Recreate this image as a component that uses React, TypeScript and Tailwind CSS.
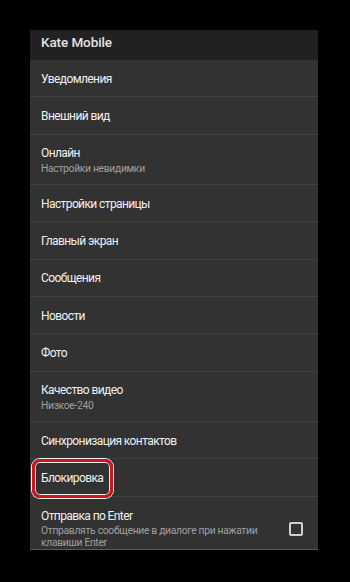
const items: { title: string; sub?: string; mark?: boolean }[] = [
  { title: "Уведомления" },
  { title: "Внешний вид" },
  { title: "Онлайн", sub: "Настройки невидимки" },
  { title: "Настройки страницы" },
  { title: "Главный экран" },
  { title: "Сообщения" },
  { title: "Новости" },
  { title: "Фото" },
  { title: "Качество видео", sub: "Низкое-240" },
  { title: "Синхронизация контактов" },
  { title: "Блокировка", mark: true },
];

function Row({ title, sub, mark }: { title: string; sub?: string; mark?: boolean }) {
  return (
    <div
      className={`relative flex flex-col justify-center border-b border-[#414141] px-[11px] pt-[2px] ${
        sub ? "h-[50.5px]" : "h-[37.3px]"
      }`}
    >
      <p className="text-[12px] leading-[15px] tracking-[-0.6px] text-[#f0f0f0]">{title}</p>
      {sub && (
        <p className="mt-[1px] text-[10.3px] leading-[13px] tracking-[-0.3px] text-[#a0a0a0]">{sub}</p>
      )}
      {mark && (
        <span className="absolute left-[2px] top-[0px] h-[39px] w-[81px] rounded-[8px] border-[3px] border-[#d4141c] shadow-[0_0_0_1px_#f2f2f2,inset_0_0_0_1px_#f2f2f2]" />
      )}
    </div>
  );
}

export default function App() {
  return (
    <div
      className="h-[582px] w-[350px] overflow-hidden bg-black pl-[30px] pt-[30px]"
      style={{ fontFamily: "Roboto, 'Noto Sans', sans-serif" }}
    >
      <div className="w-[288px] bg-[#323232]">
        <div className="h-[30px] bg-[#212121] px-[11px] pt-[3px]">
          <h1 className="text-[13.5px] font-medium leading-[18px] tracking-[-0.1px] text-[#e2e2e2]">
            Kate Mobile
          </h1>
        </div>
        {items.map((it) => (
          <Row key={it.title} {...it} />
        ))}
        <div className="flex h-[53px] items-start border-b border-[#5a5a5a] px-[11px] pt-[12px]">
          <div className="flex-1">
            <p className="text-[12px] leading-[15px] tracking-[-0.6px] text-[#f0f0f0]">Отправка по Enter</p>
            <p className="mt-[1px] w-[228px] text-[10.3px] leading-[12.5px] tracking-[-0.3px] text-[#a0a0a0]">
              Отправлять сообщение в диалоге при нажатии клавиши Enter
            </p>
          </div>
          <span className="mr-[4px] mt-[13px] h-[14px] w-[14px] rounded-[2px] border-2 border-[#cfcfcf]" />
        </div>
      </div>
    </div>
  );
}
